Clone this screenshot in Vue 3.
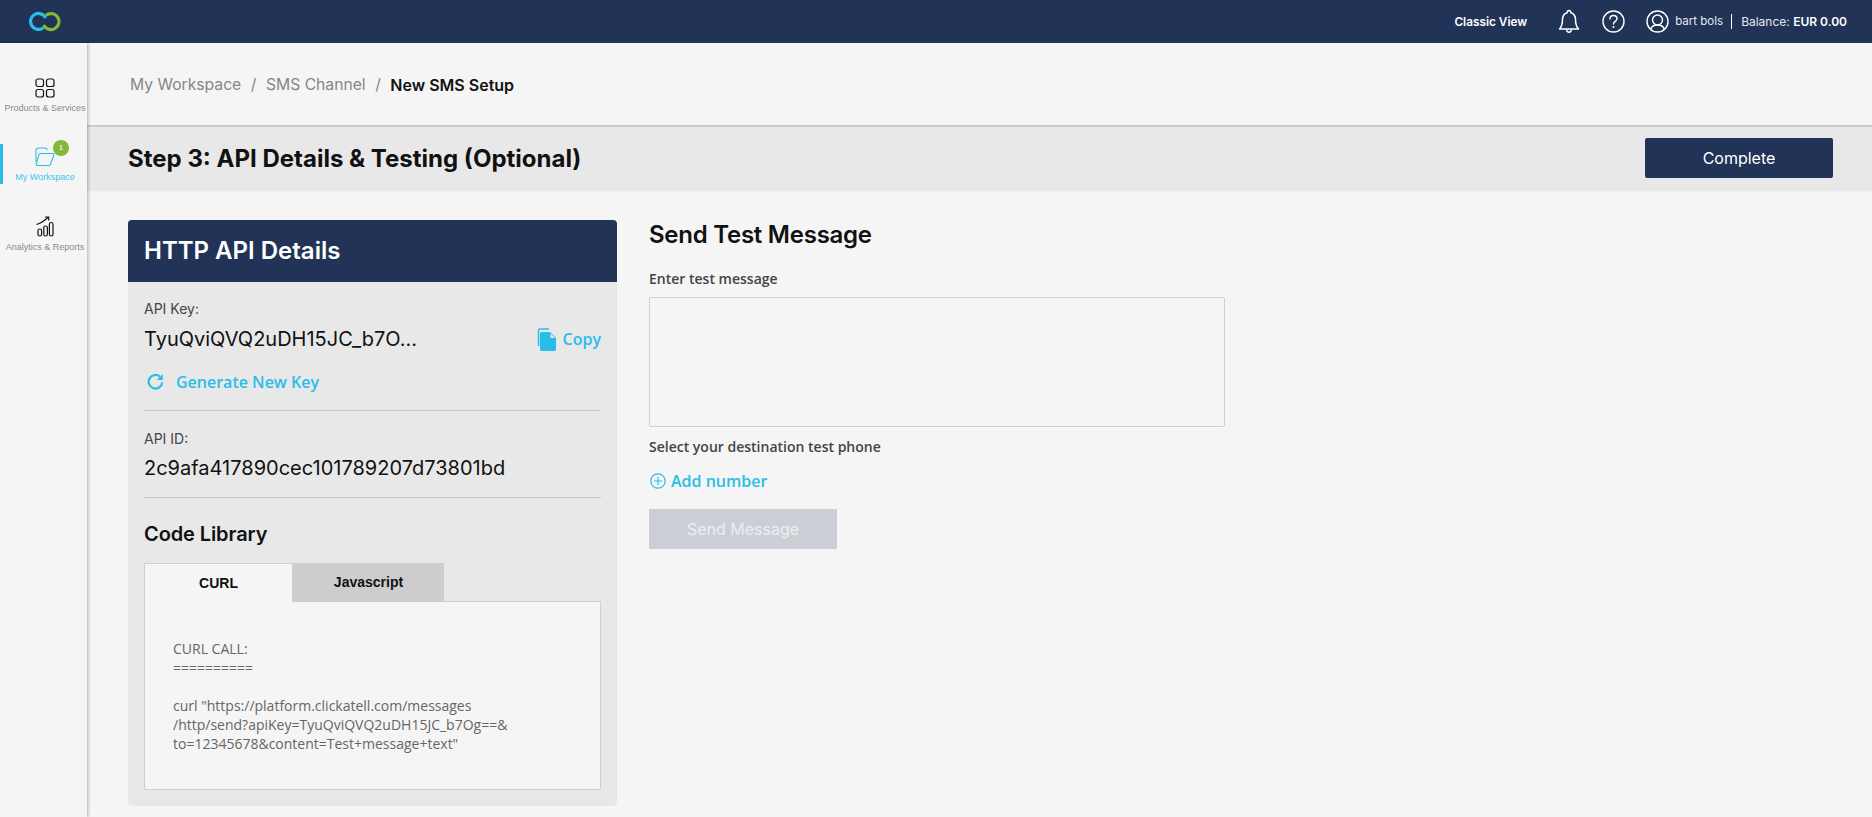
<template>
  <div class="app">
    <header class="top">
      <svg class="logo" width="34" height="22" viewBox="0 0 34 22" fill="none">
        <path d="M17.100 5.900A8 8 0 1 0 14.500 17.400" stroke="#29bde8" stroke-width="3.200" stroke-linecap="round" />
        <path d="M16.400 15.100A8 8 0 1 0 19 3.600" stroke="#84b73a" stroke-width="3.200" stroke-linecap="round" />
      </svg>
      <div class="top-right">
        <span class="classic">Classic View</span>
        <svg class="bell" width="22" height="25" viewBox="0 0 22 25" fill="none" stroke="#fff" stroke-width="1.500">
          <path d="M11 1.500c1.200 0 1.800.8 1.900 2.200 3 .9 4.600 3.400 4.600 6.800 0 4.500 1 7.300 3 9.500H1.500c2-2.200 3-5 3-9.500 0-3.400 1.600-5.900 4.600-6.800.1-1.400.7-2.200 1.900-2.200z" stroke-linejoin="round" />
          <path d="M8.500 20.500c.2 1.800 1.200 2.700 2.500 2.700s2.300-.9 2.500-2.700" />
        </svg>
        <svg class="help" width="23" height="23" viewBox="0 0 23 23" fill="none" stroke="#fff" stroke-width="1.400">
          <circle cx="11.500" cy="11.500" r="10.500" />
          <path d="M8 9c0-2.200 1.500-3.500 3.500-3.500S15 6.800 15 8.700c0 2.600-3.500 2.700-3.500 5.300" stroke-linecap="round" />
          <circle cx="11.500" cy="17" r="1" fill="#fff" stroke="none" />
        </svg>
        <svg class="user" width="23" height="23" viewBox="0 0 23 23" fill="none" stroke="#fff" stroke-width="1.400">
          <circle cx="11.500" cy="11.500" r="10.500" />
          <circle cx="11.500" cy="10" r="5" />
          <path d="M4.800 19c1-3 3-4 6.700-4s5.700 1 6.700 4" />
        </svg>
        <span class="uname">bart bols</span>
        <span class="balance">Balance: <b>EUR 0.00</b></span>
      </div>
    </header>
    <div class="body">
      <aside class="side">
        <div class="nav-item">
          <svg width="20" height="20" viewBox="0 0 20 20" fill="none" stroke="#111" stroke-width="1.200">
            <rect x="1" y="1" width="7.500" height="7.500" rx="2" />
            <rect x="11.500" y="1" width="7.500" height="7.500" rx="2" />
            <rect x="1" y="11.500" width="7.500" height="7.500" rx="2" />
            <rect x="11.500" y="11.500" width="7.500" height="7.500" rx="2" />
          </svg>
          <span>Products &amp; Services</span>
        </div>
        <div class="nav-item active">
          <div class="ic-wrap">
            <svg width="20" height="20" viewBox="0 0 20 20" fill="none" stroke="#29bde8" stroke-width="1.100">
              <path d="M1 15V3.500C1 2 2 1 3.500 1H10c1.200 0 2 .8 2.300 2" />
              <path d="M5.500 6.500H18c.8 0 1.200.6 1 1.300l-3.500 9.500c-.3.800-1 1.200-1.800 1.200H3c-1.300 0-2-1-1.600-2.200L4 7.600c.2-.7.800-1.100 1.500-1.100z" />
            </svg>
            <i class="badge">1</i>
          </div>
          <span>My Workspace</span>
        </div>
        <div class="nav-item">
          <svg width="18" height="21" viewBox="0 0 18 21" fill="none" stroke="#111" stroke-width="1.200">
            <rect x="2" y="13" width="3.600" height="7" rx="1.800" />
            <rect x="7.800" y="10" width="3.600" height="10" rx="1.800" />
            <rect x="13.400" y="6.500" width="3.600" height="13.500" rx="1.800" />
            <path d="M0.500 8.500C4 7.500 8 5 12 1.500" />
            <path d="M9 1h3.700v3.500" />
          </svg>
          <span>Analytics &amp; Reports</span>
        </div>
      </aside>
      <main class="main">
        <nav class="crumbs">
          <span>My Workspace</span><em>/</em><span>SMS Channel</span><em>/</em><b>New SMS Setup</b>
        </nav>
        <section class="step">
          <h1>Step 3: API Details &amp; Testing (Optional)</h1>
          <button class="complete">Complete</button>
        </section>
        <div class="cols">
          <div class="card">
            <h2 class="card-head">HTTP API Details</h2>
            <div class="card-body">
              <label class="f-label">API Key:</label>
              <div class="key-row">
                <span class="val">TyuQviQVQ2uDH15JC_b7O...</span>
                <span class="link copy">
                  <svg width="20" height="23" viewBox="0 0 20 23">
                    <path d="M1.500 18V2.500C1.500 1.700 2.200 1 3 1h9" fill="none" stroke="#29bde8" stroke-width="1.500" />
                    <path d="M4.500 4h8.500l6 6v11.500c0 .8-.7 1.500-1.500 1.500h-13c-.8 0-1.500-.7-1.500-1.500V5.500C3 4.700 3.700 4 4.500 4zM13.500 5.500V10h4.500z" fill="#29bde8" fill-rule="evenodd" />
                  </svg>
                  Copy
                </span>
              </div>
              <div class="link gen">
                <svg width="18" height="18" viewBox="0 0 18 18" fill="none" stroke="#29bde8" stroke-width="2.200">
                  <path d="M15.200 9.500A6.800 6.800 0 1 1 13 3.700" />
                  <path d="M15.800 1v6h-6" fill="#29bde8" stroke="none" />
                </svg>
                Generate New Key
              </div>
              <hr />
              <label class="f-label id">API ID:</label>
              <div class="val id-val">2c9afa417890cec101789207d73801bd</div>
              <hr class="hr2" />
              <h3>Code Library</h3>
              <div class="tabs">
                <div class="tab on">CURL</div>
                <div class="tab">Javascript</div>
              </div>
              <div class="code">
                <div v-for="(line, i) in codeLines" :key="i" class="code-line">{{ line }}</div>
              </div>
            </div>
          </div>
          <div class="test">
            <h2>Send Test Message</h2>
            <label class="t-label">Enter test message</label>
            <textarea class="area"></textarea>
            <label class="t-label second">Select your destination test phone</label>
            <div class="add">
              <svg width="16" height="16" viewBox="0 0 16 16" fill="none" stroke="#29bde8" stroke-width="1.200">
                <circle cx="8" cy="8" r="7.200" />
                <path d="M8 4v8M4 8h8" />
              </svg>
              Add number
            </div>
            <button class="send">Send Message</button>
          </div>
        </div>
      </main>
    </div>
  </div>
</template>

<script setup>
const codeLines = [
  'CURL CALL:',
  '==========',
  '',
  'curl "https://platform.clickatell.com/messages',
  '/http/send?apiKey=TyuQviQVQ2uDH15JC_b7Og==&',
  'to=12345678&content=Test+message+text"',
]
</script>

<style>
html, body { margin: 0; overflow: hidden; background: #f5f5f5; }
</style>

<style scoped>
.app { width: 1872px; height: 817px; overflow: hidden; display: flex; flex-direction: column; background: #f5f5f5; font-family: Inter, "Liberation Sans", sans-serif; color: #111; }
.top { height: 43px; flex: none; background: #213457; display: flex; align-items: center; justify-content: space-between; padding-right: 25px; }
.logo { margin-left: 28px; }
.top-right { display: flex; align-items: center; color: #fff; }
.classic { font-size: 11.8px; font-weight: 600; margin-right: 31px; }
.bell { margin-right: 22px; }
.help { margin-right: 21px; }
.user { margin-right: 6px; }
.uname { font-size: 11.500px; color: #e6e8ee; padding-right: 8px; border-right: 1px solid #fff; line-height: 15px; }
.balance { font-size: 12px; margin-left: 9px; color: #e6e8ee; }
.balance b { font-weight: 600; color: #fff; }
.body { flex: 1; display: flex; min-height: 0; }
.side { width: 87px; flex: none; box-sizing: border-box; padding: 35px 0 0 3px; background: #f5f5f5; box-shadow: 1px 0 3px rgba(0,0,0,.3); display: flex; flex-direction: column; z-index: 2; }
.nav-item { height: 69px; flex: none; display: flex; flex-direction: column; align-items: center; gap: 5px; font-family: "Liberation Sans", sans-serif; font-size: 9px; line-height: 11px; color: #8a8a8a; position: relative; white-space: nowrap; }
.nav-item.active { color: #3cc4ea; }
.nav-item.active::before { content: ""; position: absolute; left: -3px; top: -3px; width: 3px; height: 40px; background: #29bde8; }
.ic-wrap { position: relative; height: 20px; }
.badge { position: absolute; left: 18px; top: -7px; width: 16px; height: 16px; border-radius: 50%; background: #84b73a; color: #fff; font-style: normal; font-size: 8px; line-height: 16px; text-align: center; }
.main { flex: 1; min-width: 0; }
.crumbs { height: 82px; box-sizing: border-box; padding: 32px 0 0 43px; font-size: 15.700px; line-height: 20px; color: #868686; display: flex; }
.crumbs em { font-style: normal; margin: 0 9.500px; }
.crumbs b { font-size: 16px; font-weight: 600; color: #111; }
.step { height: 65px; box-sizing: border-box; background: #e8e8e8; border-top: 2px solid #ccc; box-shadow: 0 1px 2px rgba(0,0,0,.08); display: flex; align-items: center; justify-content: space-between; padding: 0 39px 1px 41px; }
.step h1 { margin: 0; font-size: 24px; font-weight: 650; }
.complete { width: 188px; height: 40px; background: #213457; color: #fff; border: 0; border-radius: 2px; font: 400 16px Inter, sans-serif; }
.cols { display: flex; padding: 30px 0 0 41px; gap: 32px; align-items: flex-start; }
.card { width: 489px; height: 586px; background: #e8e8e8; border-radius: 4px; overflow: hidden; flex: none; }
.card-head { margin: 0; height: 62px; background: #213457; color: #fff; font-size: 24px; font-weight: 600; line-height: 62px; padding-left: 16px; }
.card-body { padding: 17px 16px 0; }
.f-label { display: block; font-size: 14px; line-height: 20px; color: #444; }
.key-row { display: flex; justify-content: space-between; align-items: center; margin-top: 5px; height: 30px; }
.val { font-size: 20px; line-height: 30px; }
.link { color: #29bde8; font-family: "Open Sans", sans-serif; font-weight: 600; font-size: 16px; display: flex; align-items: center; }
.copy { gap: 6px; }
.gen { margin: 13px 0 0 3px; gap: 11px; height: 30px; }
hr { border: 0; border-top: 1px solid #c8c8c8; margin: 13px 0 0; }
.f-label.id { margin-top: 18px; }
.id-val { margin-top: 4px; }
hr.hr2 { margin-top: 14px; }
h3 { margin: 21px 0 0; font-size: 20px; font-weight: 600; letter-spacing: -.1px; line-height: 30px; }
.tabs { display: flex; margin-top: 14px; position: relative; z-index: 1; }
.tab { height: 39px; width: 151px; background: #cdcdcd; font-family: "Liberation Sans", sans-serif; font-weight: 700; font-size: 14px; line-height: 38px; text-align: center; }
.tab.on { width: 149px; box-sizing: border-box; background: #f5f5f5; border: 1px solid #ccced8; border-bottom: 0; }
.code { height: 189px; box-sizing: border-box; margin-top: -1px; background: #f5f5f5; border: 1px solid #ccced8; border-radius: 0 0 2px 2px; padding: 37px 28px 0; font-family: "Open Sans", sans-serif; font-size: 14px; line-height: 19px; color: #666; }
.code-line { min-height: 19px; white-space: pre; }
.test { width: 576px; }
.test h2 { margin: 0; font-size: 24px; font-weight: 600; letter-spacing: -.25px; line-height: 30px; }
.t-label { display: block; font-family: "Open Sans", sans-serif; font-weight: 600; font-size: 14px; line-height: 20px; color: #444; margin-top: 19px; }
.area { display: block; box-sizing: border-box; width: 576px; height: 130px; margin-top: 8px; background: #f5f5f5; border: 1px solid #ccced8; border-radius: 2px; resize: none; padding: 0; }
.t-label.second { margin-top: 10px; }
.add { display: flex; align-items: center; gap: 5px; margin: 12px 0 0 1px; color: #29bde8; font-family: "Open Sans", sans-serif; font-weight: 600; font-size: 16px; line-height: 24px; }
.send { display: block; width: 188px; height: 40px; margin-top: 16px; background: #cbced5; color: #eceef0; border: 0; border-radius: 1px; font: 400 16px Inter, sans-serif; }
</style>
